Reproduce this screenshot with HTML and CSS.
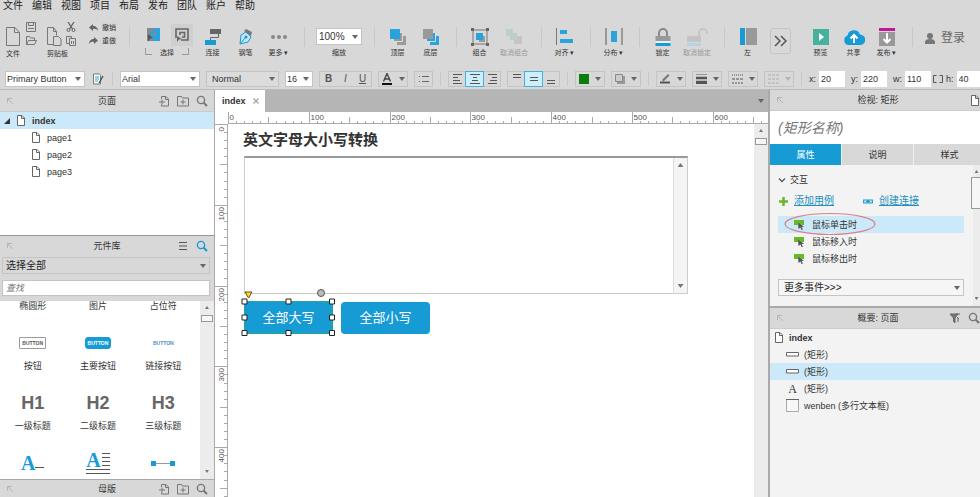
FILE: index.html
```html
<!DOCTYPE html>
<html lang="zh-CN">
<head>
  <meta charset="UTF-8">
  <meta name="viewport" content="width=device-width, initial-scale=1.0">
  <title>index - Prototype Editor</title>
  <link rel="stylesheet" href="styles.css">
</head>
<body>
  <!-- shared icons -->
  <svg class="defs" aria-hidden="true">
    <symbol id="page" viewBox="0 0 10 11"><path d="M1.500.500h4.500l2.500 2.500v7.500h-7z M5.500.500v3h3" fill="#fff" stroke="#666"/></symbol>
    <symbol id="undock" viewBox="0 0 8 8"><path d="M1.500 6V1.500H6M1.500 1.500L7 7" fill="none" stroke="#b5b5b5"/></symbol>
    <symbol id="addPage" viewBox="0 0 12 12"><path d="M3.500 4V1.500h4.500l2.500 2.500v7h-7V9.500M7.500 1.500v3h3M1 7h6M4 4.500v5" fill="none" stroke="#777"/></symbol>
    <symbol id="addFolder" viewBox="0 0 12 12"><path d="M.5 1.500h4l1 1.500h6v8H.5zM3.500 7h5M6 4.500v5" fill="none" stroke="#777"/></symbol>
    <symbol id="search" viewBox="0 0 12 12"><path d="M7.700 7.700L11 11" stroke="currentColor" stroke-width="2"/><circle cx="5" cy="5" r="3.600" fill="none" stroke="currentColor" stroke-width="1.400"/></symbol>
    <symbol id="caret" viewBox="0 0 6 4"><path d="M0 0h6L3 4z" fill="#666"/></symbol>
    <symbol id="event" viewBox="0 0 11 11"><path d="M0 1h10v5H8L4 3v3H0z" fill="#6b2"/><path d="M4 3l6 5H7.500l1.500 2.500-1.500.5L6.500 8.500 4.500 10z" fill="#555"/></symbol>
    <symbol id="rect" viewBox="0 0 13 5"><path d="M.5.500h12v3.500h-12z" fill="#fff" stroke="#666"/></symbol>
  </svg>

  <nav class="menubar">
    <a href="#">文件</a>
    <a href="#">编辑</a>
    <a href="#">视图</a>
    <a href="#">项目</a>
    <a href="#">布局</a>
    <a href="#">发布</a>
    <a href="#">团队</a>
    <a href="#">账户</a>
    <a href="#">帮助</a>
  </nav>

  <div class="toolbar">
    <div class="tool-group file-group">
      <div class="tool-pair">
        <button aria-label="新建"><svg width="14" height="19" viewBox="0 0 14 19"><path d="M.5.500h8.500l4.500 5v13H.5zM8.500.500v5h5" fill="none" stroke="#777"/></svg></button>
        <div class="tool-stack">
          <button aria-label="保存"><svg width="10" height="10" viewBox="0 0 10 10"><path d="M.5.500h9v9h-9zM2.500.500v3h5v-3M2 6.500h6" fill="none" stroke="#777"/></svg></button>
          <button aria-label="打开"><svg width="11" height="10" viewBox="0 0 11 10"><path d="M.5 8.500v-8h3l1 1.500h4v2M.5 8.500l2-4h8l-2 4z" fill="none" stroke="#777"/></svg></button>
        </div>
      </div>
      <span>文件</span>
    </div>
    <div class="tool-group clip-group">
      <div class="tool-pair">
        <button aria-label="粘贴"><svg width="15" height="19" viewBox="0 0 15 19"><path d="M6.500 17.500h-6V.500h6l3 4v4M6.500.500v4h3M6.500 9.500h5l2.500 2.500v6.500H6.500z" fill="none" stroke="#777"/></svg></button>
        <div class="tool-stack">
          <button aria-label="剪切"><svg width="10" height="10" viewBox="0 0 10 10"><path d="M2 0l4.500 7M8 0L3.500 7" stroke="#666" stroke-width="1.300"/><circle cx="2.500" cy="8" r="1.500" fill="none" stroke="#666"/><circle cx="7.500" cy="8" r="1.500" fill="none" stroke="#666"/></svg></button>
          <button aria-label="复制"><svg width="10" height="10" viewBox="0 0 10 10"><path d="M3.500 7.500h-3v-7h5v2M3.500 2.500h6v7h-6zM5.500 5v3M7.500 5v3" fill="none" stroke="#777"/></svg></button>
        </div>
      </div>
      <span>剪贴板</span>
    </div>
    <div class="undo-group">
      <button><svg width="9" height="8" viewBox="0 0 9 8"><path d="M0 3.500L4 0v2c3 0 5 2 5 5-1-2-3-2.500-5-2v2z" fill="#666"/></svg>撤销</button>
      <button><svg width="9" height="8" viewBox="0 0 9 8"><path d="M9 3.500L5 0v2C2 2 0 4 0 7c1-2 3-2.500 5-2v2z" fill="#666"/></svg>重做</button>
    </div>
    <i class="sep"></i>
    <div class="select-group">
      <div class="select-modes">
        <button aria-label="相交选中"><svg width="14" height="14" viewBox="0 0 14 14"><path d="M0 0h6v13H0z" fill="#888"/><path d="M6 0h7v13H6z" fill="#29a3dc"/><path d="M3 3h3v6H3z" fill="#29a3dc"/><path d="M6 3h3v4H6z" fill="#888"/><path d="M1 6l5 4-3 .5L1 14z" fill="#555"/></svg></button>
        <button class="pressed" aria-label="包含选中"><svg width="14" height="14" viewBox="0 0 14 14"><path d="M1 10V1h12v11H6M5 7V4.500h4.500V9H7" fill="none" stroke="#666" stroke-width="1.600"/><path d="M2 8l5 3-3 .5L2 14z" fill="#666"/></svg></button>
      </div>
      <span class="bracket">选择</span>
    </div>
    <button class="tool"><svg width="18" height="18" viewBox="0 0 18 18"><path d="M6 1h11v5H6z" fill="#666"/><path d="M1 12h11v5H1z" fill="#169bd5"/><path d="M14.500 6v3.500h-8V12" fill="none" stroke="#666"/></svg>连接</button>
    <button class="tool"><svg width="18" height="18" viewBox="0 0 18 18"><path d="M3 16l1-9 5-3 5 5-3 5z" fill="#c5e5f4" stroke="#169bd5"/><path d="M3 16l5-6" stroke="#169bd5"/><circle cx="9" cy="9" r="1.500" fill="#169bd5"/><path d="M7 3l2-2 6 3-1 4z" fill="#777"/></svg>钢笔</button>
    <button class="tool"><svg width="18" height="18" viewBox="0 0 18 18"><g fill="#888"><circle cx="3" cy="9" r="2"/><circle cx="9" cy="9" r="2"/><circle cx="15" cy="9" r="2"/></g></svg>更多 ▾</button>
    <i class="sep"></i>
    <div class="zoom">
      <select id="zoom"><option>100%</option></select>
      <label for="zoom">缩放</label>
    </div>
    <i class="sep"></i>
    <button class="tool"><svg width="18" height="18" viewBox="0 0 18 18"><path d="M8 8h9v9H8z" fill="#999"/><path d="M4.500 4.500h9v9h-9z" fill="#999" stroke="#ddd"/><path d="M1 1h10v10H1z" fill="#29a3dc"/></svg>顶层</button>
    <button class="tool"><svg width="18" height="18" viewBox="0 0 18 18"><path d="M8 8h9v9H8z" fill="#29a3dc"/><path d="M4.500 4.500h9v9h-9z" fill="#29a3dc" stroke="#ddd"/><path d="M1 1h10v10H1z" fill="#999"/></svg>底层</button>
    <i class="sep"></i>
    <button class="tool"><svg width="18" height="18" viewBox="0 0 18 18"><path d="M2 2h14v14H2z" fill="none" stroke="#777"/><path d="M8 8h6v6H8z" fill="#999"/><path d="M5 5h7v7H5z" fill="#29a3dc"/><path d="M0 0h3v3H0zM15 0h3v3h-3zM0 15h3v3H0zM15 15h3v3h-3z" fill="#666"/></svg>组合</button>
    <button class="tool wide disabled"><svg width="18" height="18" viewBox="0 0 18 18"><path d="M1 1h7v7H1z" fill="#bccfce"/><path d="M9 8h8v8H9z" fill="#c4c4c4"/><path d="M5 5h7v7H5z" fill="#b8cfce"/></svg>取消组合</button>
    <i class="sep"></i>
    <button class="tool"><svg width="18" height="18" viewBox="0 0 18 18"><path d="M.500 0v17" stroke="#777"/><path d="M4 2h7v4H4zM4 11h13v4H4z" fill="#29a3dc"/></svg>对齐 ▾</button>
    <i class="sep"></i>
    <button class="tool"><svg width="18" height="18" viewBox="0 0 18 18"><path d="M1 0v17M17 0v17" stroke="#999" stroke-width="2"/><path d="M6 3h6v11H6z" fill="#29a3dc"/></svg>分布 ▾</button>
    <i class="sep"></i>
    <button class="tool"><svg width="18" height="18" viewBox="0 0 18 18"><path d="M5 9V5a4 4 0 0 1 8 0v4" fill="none" stroke="#888" stroke-width="2"/><path d="M1.500 8h15v5h-15z" fill="#999"/><path d="M1.500 13h15v2h-15z" fill="#eee"/><path d="M1.500 15h15v3h-15z" fill="#169bd5"/></svg>锁定</button>
    <button class="tool wide disabled"><svg width="22" height="18" viewBox="0 0 22 18"><path d="M13 9V5a4 4 0 0 1 8 0v1" fill="none" stroke="#c4c4c4" stroke-width="2"/><path d="M1 8h14v6H1z" fill="#c4c4c4"/><path d="M1 15h14v3H1z" fill="#b5d3e4"/></svg>取消锁定</button>
    <i class="sep"></i>
    <button class="tool"><svg width="18" height="18" viewBox="0 0 18 18"><path d="M1 0h5v17H1z" fill="#169bd5"/><path d="M7 0h11v17H7z" fill="#999"/></svg>左</button>
    <button class="expand" aria-label="展开"><svg width="13" height="12" viewBox="0 0 13 12"><path d="M1 1l5 5-5 5M7 1l5 5-5 5" fill="none" stroke="#555" stroke-width="1.500"/></svg></button>
    <button class="tool first"><svg width="18" height="18" viewBox="0 0 18 18"><path d="M1 1h16v16H1z" fill="#45b39c"/><path d="M7 5l5 4-5 4z" fill="#fff"/></svg>预览</button>
    <button class="tool"><svg width="22" height="18" viewBox="0 0 22 18"><path d="M5 17a5 5 0 0 1-.500-9.500A6.500 6.500 0 0 1 17 6.500 5.200 5.200 0 0 1 17 17z" fill="#169bd5"/><path d="M11 15V8M7.500 10.500L11 7l3.500 3.500" fill="none" stroke="#fff" stroke-width="2"/></svg>共享</button>
    <button class="tool"><svg width="18" height="18" viewBox="0 0 18 18"><path d="M1 0h16v3H1z" fill="#c3179b"/><path d="M1 4h16v14H1z" fill="#999"/><path d="M9 5v9M5.500 11L9 14.500l3.500-3.500" fill="none" stroke="#fff" stroke-width="2"/></svg>发布 ▾</button>
    <i class="sep"></i>
    <button class="login"><svg width="10" height="11" viewBox="0 0 10 11"><circle cx="5" cy="3" r="3" fill="#777"/><path d="M0 11V9c0-2 2-3 5-3s5 1 5 3v2z" fill="#777"/></svg>登录</button>
  </div>

  <div class="formatbar">
    <select class="style-name" aria-label="样式"><option>Primary Button</option></select>
    <button class="plain" aria-label="样式管理"><svg width="12" height="12" viewBox="0 0 12 12"><path d="M1.500 1h6l1 1.500v8.500h-7z" fill="#fff" stroke="#777"/><path d="M3 4h4M3 6h4M3 8h3" stroke="#29a3dc"/><path d="M11 3l-4 7" stroke="#555" stroke-width="1.500"/></svg></button>
    <i class="sep"></i>
    <select class="font-name" aria-label="字体"><option>Arial</option></select>
    <select class="font-type" aria-label="字型"><option>Normal</option></select>
    <select class="font-size" aria-label="字号"><option>16</option></select>
    <div class="segment">
      <button><b>B</b></button>
      <button><i>I</i></button>
      <button><u>U</u></button>
    </div>
    <button class="drop" aria-label="文字颜色"><svg width="12" height="12" viewBox="0 0 12 12"><path d="M2.500 8.500L6 .5l3.500 8M4 6h4" fill="none" stroke="#444" stroke-width="1.400"/><path d="M1 10h10v2H1z" fill="#111"/></svg><svg width="6" height="4"><use href="#caret"/></svg></button>
    <button class="box" aria-label="项目符号"><svg width="12" height="10" viewBox="0 0 12 10"><path d="M1 2.500h1M4 2.500h7M1 7.500h1M4 7.500h7" stroke="#666"/></svg></button>
    <i class="sep"></i>
    <div class="segment">
      <button aria-label="左对齐"><svg width="10" height="10" viewBox="0 0 10 10"><path d="M0 .5h9M0 3.500h5M0 6.500h7M0 9.500h9" stroke="#555"/></svg></button>
      <button class="on" aria-label="居中"><svg width="10" height="10" viewBox="0 0 10 10"><path d="M0 .5h10M3 3.500h4M2 6.500h6M0 9.500h10" stroke="#555"/></svg></button>
      <button aria-label="右对齐"><svg width="10" height="10" viewBox="0 0 10 10"><path d="M1 .5h9M5 3.500h5M3 6.500h7M1 9.500h9" stroke="#555"/></svg></button>
    </div>
    <div class="segment">
      <button aria-label="顶部对齐"><svg width="8" height="10" viewBox="0 0 8 10"><path d="M0 .5h8M0 3.500h8" stroke="#555"/></svg></button>
      <button class="on" aria-label="垂直居中"><svg width="8" height="10" viewBox="0 0 8 10"><path d="M0 3.500h8M0 6.500h8" stroke="#555"/></svg></button>
      <button aria-label="底部对齐"><svg width="8" height="10" viewBox="0 0 8 10"><path d="M0 6.500h8M0 9.500h8" stroke="#555"/></svg></button>
    </div>
    <i class="sep"></i>
    <button class="drop" aria-label="填充颜色"><svg width="10" height="10"><path d="M0 0h10v10H0z" fill="#0a7d0a"/></svg><svg width="6" height="4"><use href="#caret"/></svg></button>
    <button class="drop" aria-label="阴影"><svg width="10" height="10" viewBox="0 0 10 10"><path d="M2 2h8v8H2z" fill="#999"/><path d="M.5.500h7v7h-7z" fill="#ccc" stroke="#888"/></svg><svg width="6" height="4"><use href="#caret"/></svg></button>
    <i class="sep"></i>
    <button class="drop" aria-label="线条颜色"><svg width="11" height="11" viewBox="0 0 11 11"><path d="M2 7l6-6 1.500 1.500-6 6z" fill="#777"/><path d="M0 9.500h10" stroke="#555" stroke-width="2"/></svg><svg width="6" height="4"><use href="#caret"/></svg></button>
    <button class="drop" aria-label="线宽"><svg width="11" height="10" viewBox="0 0 11 10"><path d="M0 .5h11M0 3h11v2H0zM0 7h11v3H0z" fill="#555" stroke="#555" stroke-width=".5"/></svg><svg width="6" height="4"><use href="#caret"/></svg></button>
    <button class="drop" aria-label="线型"><svg width="11" height="10" viewBox="0 0 11 10"><path d="M0 1h11" stroke="#555" stroke-dasharray="1 1"/><path d="M0 5h11" stroke="#555" stroke-dasharray="3 1"/><path d="M0 9h11" stroke="#555" stroke-dasharray="2 1"/></svg><svg width="6" height="4"><use href="#caret"/></svg></button>
    <button class="drop faded" aria-label="箭头"><svg width="11" height="10" viewBox="0 0 11 10"><path d="M0 1h11M0 5h11M0 9h11" stroke="#555" stroke-dasharray="3 1"/></svg><svg width="6" height="4"><use href="#caret"/></svg></button>
    <i class="sep"></i>
    <div class="coord"><label for="posX">x:</label><input id="posX" type="text" value="20"></div>
    <div class="coord"><label for="posY">y:</label><input id="posY" type="text" value="220"></div>
    <div class="coord"><label for="sizeW">w:</label><input id="sizeW" type="text" value="110"></div>
    <div class="coord last"><svg width="10" height="8" viewBox="0 0 10 8"><path d="M3.500.500h-3v7h3M6.500.500h3v7h-3" fill="none" stroke="#555"/></svg><label for="sizeH">h:</label><input id="sizeH" type="text" value="40"></div>
  </div>

  <div class="workspace">
    <aside class="left">
      <section class="pages">
        <header class="panel-head">
          <svg width="8" height="8"><use href="#undock"/></svg>
          <h2>页面</h2>
          <div class="head-icons">
            <button aria-label="添加页面"><svg width="12" height="12"><use href="#addPage"/></svg></button>
            <button aria-label="添加文件夹"><svg width="12" height="12"><use href="#addFolder"/></svg></button>
            <button aria-label="搜索"><svg width="12" height="12"><use href="#search"/></svg></button>
          </div>
        </header>
        <ul class="tree">
          <li class="root selected"><svg width="6" height="6" viewBox="0 0 6 6"><path d="M6 0v6H0z" fill="#333"/></svg><svg width="10" height="11"><use href="#page"/></svg>index</li>
          <li><svg width="10" height="11"><use href="#page"/></svg>page1</li>
          <li><svg width="10" height="11"><use href="#page"/></svg>page2</li>
          <li><svg width="10" height="11"><use href="#page"/></svg>page3</li>
        </ul>
      </section>
      <section class="library">
        <header class="panel-head">
          <svg width="8" height="8"><use href="#undock"/></svg>
          <h2>元件库</h2>
          <div class="head-icons">
            <button aria-label="菜单"><svg width="12" height="12" viewBox="0 0 12 12"><path d="M2 2.500h8M2 6h8M2 9.500h8" stroke="#555"/></svg></button>
            <button class="blue" aria-label="搜索"><svg width="12" height="12"><use href="#search"/></svg></button>
          </div>
        </header>
        <div class="filters">
          <select aria-label="元件库"><option>选择全部</option></select>
          <input type="text" placeholder="查找" aria-label="查找">
        </div>
        <div class="widgets">
          <div class="widget-grid">
            <div class="widget"><span>椭圆形</span></div>
            <div class="widget"><span>图片</span></div>
            <div class="widget"><span>占位符</span></div>
            <div class="widget"><div class="thumb"><b class="mini">BUTTON</b></div><span>按钮</span></div>
            <div class="widget"><div class="thumb"><b class="mini primary">BUTTON</b></div><span>主要按钮</span></div>
            <div class="widget"><div class="thumb"><b class="mini link">BUTTON</b></div><span>链接按钮</span></div>
            <div class="widget"><div class="thumb heading">H1</div><span>一级标题</span></div>
            <div class="widget"><div class="thumb heading">H2</div><span>二级标题</span></div>
            <div class="widget"><div class="thumb heading">H3</div><span>三级标题</span></div>
            <div class="widget"><div class="thumb letter">A<svg width="9" height="12"><path d="M0 10.500h9" stroke="#555"/></svg></div></div>
            <div class="widget"><div class="thumb letter para"><div>A<svg width="9" height="15" viewBox="0 0 9 15"><path d="M1 1.500h8M1 5.500h8M1 9.500h8M1 13.500h8" stroke="#555"/></svg></div></div></div>
            <div class="widget"><div class="thumb"><svg width="24" height="5" viewBox="0 0 24 5"><path d="M2 2.500h20" stroke="#999"/><path d="M0 0h5v5H0zM19 0h5v5h-5z" fill="#169bd5"/></svg></div></div>
          </div>
          <div class="scrollbar"><i class="up"></i><i class="handle"></i><i class="down"></i></div>
        </div>
      </section>
      <header class="panel-head masters">
        <svg width="8" height="8"><use href="#undock"/></svg>
        <h2>母版</h2>
        <div class="head-icons">
          <button aria-label="添加母版"><svg width="12" height="12"><use href="#addPage"/></svg></button>
          <button aria-label="添加文件夹"><svg width="12" height="12"><use href="#addFolder"/></svg></button>
          <button aria-label="搜索"><svg width="12" height="12"><use href="#search"/></svg></button>
        </div>
      </header>
    </aside>

    <main class="editor">
      <div class="tabs">
        <div class="tab">index <button aria-label="关闭"><svg width="6" height="6" viewBox="0 0 6 6"><path d="M.5.500l5 5M5.500.500l-5 5" stroke="#aaa" stroke-width="1.500"/></svg></button></div>
        <svg width="6" height="4"><use href="#caret"/></svg>
      </div>
      <div class="stage">
        <div class="corner"></div>
        <svg class="ruler-x" id="rulerX"></svg>
        <svg class="ruler-y" id="rulerY"></svg>
        <div class="canvas">
          <h1>英文字母大小写转换</h1>
          <textarea aria-label="wenben"></textarea>
          <div class="gutter"><i class="up"></i><i class="down"></i></div>
          <button class="shape upper">全部大写</button>
          <button class="shape lower">全部小写</button>
          <svg class="selection" width="96" height="52" viewBox="0 0 96 52">
            <path d="M4.500 15.500h87v31h-87z" fill="none" stroke="#2aa58f"/>
            <path d="M5 6h7l-3.500 6z" fill="#fd3" stroke="#740"/>
            <circle cx="81" cy="7" r="3.500" fill="#bbb" stroke="#555"/>
            <path d="M2 13h5v5H2zM46 13h5v5h-5zM89.500 13h5v5h-5zM2 29h5v5H2zM89.500 29h5v5h-5zM2 44.500h5v5H2zM46 44.500h5v5h-5zM89.500 44.500h5v5h-5z" fill="#fff" stroke="#222"/>
          </svg>
        </div>
        <div class="scrollbar"><i class="up"></i><i class="handle"></i></div>
      </div>
    </main>

    <aside class="right">
      <section class="inspector">
        <header class="panel-head">
          <svg width="8" height="8"><use href="#undock"/></svg>
          <h2>检视: 矩形</h2>
          <div class="head-icons"><svg width="10" height="11"><use href="#page"/></svg></div>
        </header>
        <input class="shape-name" type="text" placeholder="(矩形名称)" aria-label="矩形名称">
        <div class="prop-tabs">
          <button class="active">属性</button>
          <button>说明</button>
          <button>样式</button>
        </div>
        <div class="props">
          <div class="props-body">
            <h3><svg width="8" height="5" viewBox="0 0 8 5"><path d="M1 .5l3 3 3-3" fill="none" stroke="#555" stroke-width="1.300"/></svg>交互</h3>
            <div class="links">
              <svg width="9" height="9" viewBox="0 0 9 9"><path d="M4.500 0v9M0 4.500h9" stroke="#6ab52b" stroke-width="2.500"/></svg>
              <a href="#">添加用例</a>
              <svg class="chain" width="10" height="5" viewBox="0 0 10 5"><path d="M.7 1h3.600v3H.7zM5.700 1h3.600v3H5.700zM3 2.500h4" fill="none" stroke="#169bd5" stroke-width="1.200"/></svg>
              <a href="#">创建连接</a>
            </div>
            <ul class="events">
              <li class="selected"><svg width="11" height="11"><use href="#event"/></svg>鼠标单击时
                <svg class="ring" width="94" height="24" viewBox="0 0 94 24"><ellipse cx="47" cy="12" rx="45" ry="10.500" fill="none" stroke="#d9808c" stroke-width="1.200"/></svg>
              </li>
              <li><svg width="11" height="11"><use href="#event"/></svg>鼠标移入时</li>
              <li><svg width="11" height="11"><use href="#event"/></svg>鼠标移出时</li>
            </ul>
            <select class="more-events" aria-label="更多事件"><option>更多事件&gt;&gt;&gt;</option></select>
          </div>
          <div class="scrollbar"><i class="up"></i><i class="handle tall"></i><i class="down"></i></div>
        </div>
      </section>
      <section class="outline">
        <header class="panel-head">
          <svg width="8" height="8"><use href="#undock"/></svg>
          <h2>概要: 页面</h2>
          <div class="head-icons">
            <button aria-label="筛选"><svg width="12" height="12" viewBox="0 0 12 12"><path d="M1 2h8L6 6v5L4.500 9.500V6zM7 2h4M8 5l2 2M9 6v4" fill="#777" stroke="#666"/></svg></button>
            <button aria-label="搜索"><svg width="12" height="12"><use href="#search"/></svg></button>
          </div>
        </header>
        <ul class="layers">
          <li class="root"><svg width="10" height="11"><use href="#page"/></svg>index</li>
          <li><svg width="13" height="5"><use href="#rect"/></svg>(矩形)</li>
          <li class="selected"><svg width="13" height="5"><use href="#rect"/></svg>(矩形)</li>
          <li><span class="glyph">A</span>(矩形)</li>
          <li><svg width="13" height="13" viewBox="0 0 13 13"><path d="M.5.500h12v12H.5z" fill="#f8f8f8" stroke="#aaa"/><path d="M0 .5h13" stroke="#666"/></svg>wenben (多行文本框)</li>
        </ul>
      </section>
    </aside>
  </div>

  <script>
    // 100 canvas units = 80.8 screen px at the current zoom
    var step = 8.08;

    function drawRuler(id, vertical) {
      var ruler = document.getElementById(id);
      var box = ruler.getBoundingClientRect();
      var size = vertical ? box.height : box.width;
      var str = "";
      for (var i = 0; i * step < size; i++) {
        var p = Math.round(i * step) + 0.5;
        var len = i % 10 == 0 ? 12 : i % 5 == 0 ? 7 : 3;
        if (vertical) {
          str += "<path d='M" + (12 - len) + " " + p + "h" + len + "'/>";
        } else {
          str += "<path d='M" + p + " " + (12 - len) + "v" + len + "'/>";
        }
        if (i % 10 == 0 && p + 20 < size) {
          var n = i * 10;
          if (vertical) {
            var end = p + 3 + String(n).length * 4;
            str += "<text transform='translate(9 " + end + ") rotate(-90)'>" + n + "</text>";
          } else {
            str += "<text x='" + (p + 1) + "' y='8'>" + n + "</text>";
          }
        }
      }
      ruler.innerHTML = str;
    }

    function drawRulers() {
      drawRuler("rulerX", false);
      drawRuler("rulerY", true);
    }

    drawRulers();
    window.addEventListener("resize", drawRulers);
  </script>
</body>
</html>
```
FILE: styles.css
```css
* {
  box-sizing: border-box;
}

body {
  display: flex;
  flex-direction: column;
  height: 100vh;
  margin: 0;
  overflow: hidden;
  background-color: #d8d8d8;
  color: #333;
  font-family: "Liberation Sans", "Noto Sans CJK SC", sans-serif;
  font-size: 9px;
  line-height: 12px;
}

h1, h2, h3, ul {
  margin: 0;
  padding: 0;
}

ul {
  list-style: none;
}

button, select, input, textarea {
  margin: 0;
  padding: 0;
  border: none;
  border-radius: 0;
  background: none;
  color: inherit;
  font: inherit;
}

svg {
  display: block;
  flex: none;
}

.defs {
  position: absolute;
  width: 0;
  height: 0;
}

select {
  appearance: none;
  border: 1px solid #c4c4c4;
  background: #fff url("data:image/svg+xml,%3Csvg xmlns='http://www.w3.org/2000/svg' width='6' height='4'%3E%3Cpath d='M0 0h6L3 4z' fill='%23666'/%3E%3C/svg%3E") no-repeat right 3px center;
}

/* menu */
.menubar {
  display: flex;
  flex: none;
  gap: 9px;
  height: 14px;
  padding-left: 3px;
  font-size: 10px;
}

.menubar a {
  color: #222;
  text-decoration: none;
}

/* main toolbar */
.toolbar {
  display: flex;
  flex: none;
  align-items: flex-start;
  height: 54px;
  padding: 8px 0 0 6px;
  font-size: 7px;
  line-height: 10px;
}

.sep {
  flex: none;
  width: 1px;
  background-color: #c8c8c8;
}

.toolbar .sep {
  height: 20px;
  margin: 5px 6px 0 9px;
}

.tool {
  display: flex;
  flex: none;
  flex-direction: column;
  align-items: center;
  gap: 2px;
  width: 33px;
  padding-top: 6px;
  white-space: nowrap;
}

.tool.wide {
  width: 36px;
}

.tool.disabled {
  color: #999;
}

.tool-group {
  flex: none;
}

.file-group {
  width: 41px;
}

.clip-group {
  width: 42px;
}

.tool-pair {
  display: flex;
  align-items: flex-end;
  gap: 6px;
  height: 24px;
  margin-bottom: 3px;
}

.clip-group .tool-pair {
  gap: 4px;
}

.tool-stack {
  display: flex;
  flex-direction: column;
  gap: 4px;
}

.undo-group {
  display: flex;
  flex: none;
  flex-direction: column;
  gap: 3px;
  width: 31px;
  padding-top: 1px;
}

.undo-group button {
  display: flex;
  align-items: center;
  gap: 4px;
}

.select-group {
  flex: none;
  width: 60px;
  padding: 2px 7px 0 9px;
}

.select-modes {
  display: flex;
  gap: 6px;
  margin-bottom: 2px;
}

.select-modes button {
  padding: 4px;
}

.select-modes button:first-child {
  padding-left: 2px;
}

.pressed {
  background-color: #cfcfcf;
}

.bracket {
  display: flex;
  justify-content: space-between;
}

.bracket::before,
.bracket::after {
  width: 6px;
  height: 6px;
  border: solid #999;
  border-width: 0 0 1px 1px;
  content: "";
}

.bracket::after {
  border-width: 0 1px 1px 0;
}

.zoom {
  display: flex;
  flex: none;
  flex-direction: column;
  align-items: center;
  gap: 3px;
  padding: 6px 3px 0 5px;
}

.zoom select {
  width: 46px;
  height: 17px;
  padding-left: 2px;
  font-size: 10px;
}

.expand {
  flex: none;
  margin: 6px 0 0 6px;
  padding: 6px 3px;
  border: 1px solid #c4c4c4;
  border-radius: 3px;
}

.tool.first {
  margin-left: 13px;
}

.login {
  display: flex;
  align-items: center;
  gap: 6px;
  margin: 9px 0 0 6px;
  color: #666;
  font-size: 12px;
  line-height: 14px;
}

/* format bar */
.formatbar {
  display: flex;
  flex: none;
  align-items: center;
  gap: 6px;
  height: 22px;
  padding-left: 5px;
  border-bottom: 1px solid #bbb;
}

.formatbar > * {
  flex: none;
}

.formatbar select {
  height: 16px;
  padding-left: 1px;
}

.formatbar .sep {
  height: 14px;
  margin: 0 1px;
}

.formatbar .style-name,
.formatbar .font-name {
  width: 80px;
}

.formatbar .font-type {
  width: 73px;
  padding-left: 5px;
  background-color: #dcdcdc;
}

.formatbar .font-size {
  width: 28px;
}

.plain {
  padding: 0 1px;
}

.segment {
  display: flex;
  border: 1px solid #c4c4c4;
}

.segment button {
  display: flex;
  align-items: center;
  justify-content: center;
  width: 17px;
  height: 14px;
  color: #555;
  font-size: 10px;
}

.segment .on {
  background-color: #cdeefb;
  outline: 1px solid #4aaeda;
}

.drop,
.box {
  display: flex;
  align-items: center;
  justify-content: center;
  gap: 6px;
  width: 30px;
  height: 16px;
  border: 1px solid #c4c4c4;
}

.box {
  width: 19px;
}

.faded svg {
  opacity: 0.3;
}

.coord {
  display: flex;
  align-items: center;
  gap: 3px;
}

.coord input {
  width: 26px;
  height: 16px;
  padding-left: 2px;
  background-color: #fff;
}

.coord.last {
  margin-left: -4px;
}

/* panels */
.workspace {
  display: flex;
  flex: 1;
  min-height: 0;
}

.left {
  display: flex;
  flex: none;
  flex-direction: column;
  width: 215px;
  border-right: 1px solid #aaa;
}

.panel-head {
  display: grid;
  grid-template-columns: 1fr auto 1fr;
  flex: none;
  align-items: center;
  height: 22px;
  padding: 0 6px;
  border-bottom: 1px solid #ccc;
  background-color: #d8d8d8;
  color: #555;
}

.panel-head h2 {
  color: #333;
  font-size: 9px;
  font-weight: normal;
}

.head-icons {
  display: flex;
  gap: 7px;
  justify-content: flex-end;
  color: #777;
}

.head-icons .blue {
  color: #169bd5;
}

.tree li,
.layers li {
  display: flex;
  align-items: center;
  gap: 6px;
  height: 17px;
  padding-left: 31px;
}

.tree .root,
.layers .root {
  padding-left: 4px;
  font-weight: bold;
}

.selected {
  background-color: #cbe9f8;
}

.pages {
  height: 146px;
  border-bottom: 1px solid #999;
  background-color: #fff;
}

.library {
  display: flex;
  flex: 1;
  flex-direction: column;
  min-height: 0;
}

.library .panel-head {
  height: 20px;
  border-bottom: none;
}

.filters {
  display: flex;
  flex-direction: column;
  gap: 6px;
  padding: 1px 4px 5px 2px;
}

.filters select {
  height: 17px;
  padding-left: 3px;
  background-color: #d8d8d8;
  color: #222;
  font-size: 10px;
}

.filters input {
  height: 16px;
  padding-left: 3px;
  border: 1px solid #c4c4c4;
  background-color: #fff;
  font-style: italic;
}

.widgets {
  display: flex;
  flex: 1;
  min-height: 0;
  overflow: hidden;
  background-color: #fff;
}

.widget-grid {
  display: grid;
  grid-template-columns: repeat(3, 1fr);
  grid-template-rows: 10px repeat(3, 60px);
  flex: 1;
  min-height: 0;
  padding-right: 4px;
}

.widget {
  display: flex;
  flex-direction: column;
  align-items: center;
  justify-content: flex-end;
  line-height: 10px;
  white-space: nowrap;
}

.thumb {
  display: flex;
  align-items: center;
  justify-content: center;
  height: 36px;
}

.mini {
  padding: 0 2px;
  border: 1px solid #999;
  border-radius: 1px;
  color: #555;
  font-size: 5px;
  line-height: 10px;
}

.mini.primary {
  border-color: #169bd5;
  border-radius: 3px;
  background-color: #169bd5;
  color: #fff;
}

.mini.link {
  border-color: transparent;
  color: #4a90c8;
}

.heading {
  color: #666;
  font-size: 18px;
  font-weight: bold;
}

.letter {
  color: #169bd5;
  font-family: "Liberation Serif", serif;
  font-size: 20px;
  font-weight: bold;
  line-height: 16px;
}

.letter svg,
.para div {
  display: inline-block;
}

.para div {
  height: 22px;
  border-bottom: 1px solid #555;
  box-shadow: inset 0 -3px #fff, inset 0 -4px #555;
}

.widget > .thumb:last-child {
  margin-bottom: 10px;
}

.panel-head.masters {
  height: 18px;
  border-top: 1px solid #aaa;
  border-bottom: none;
}

.scrollbar {
  display: flex;
  flex: none;
  flex-direction: column;
  align-items: center;
  width: 14px;
  padding: 5px 0 6px;
  background-color: #ececec;
}

.up,
.down {
  width: 6px;
  height: 4px;
  background-color: #777;
  clip-path: polygon(50% 0, 100% 100%, 0 100%);
}

.down {
  margin-top: auto;
  clip-path: polygon(0 0, 100% 0, 50% 100%);
}

.scrollbar .up,
.scrollbar .down {
  width: 4px;
  height: 3px;
}

.handle {
  width: 12px;
  height: 7px;
  margin-top: 6px;
  border: 1px solid #999;
  background-color: #f6f6f6;
}

/* editor */
.editor {
  display: flex;
  flex: 1;
  flex-direction: column;
  min-width: 0;
  border-right: 2px solid #aaa;
}

.tabs {
  display: flex;
  flex: none;
  align-items: center;
  justify-content: space-between;
  height: 22px;
  padding-right: 4px;
  background-color: #b5b5b5;
}

.tab {
  display: flex;
  align-items: center;
  gap: 7px;
  height: 22px;
  padding: 0 6px 0 7px;
  background-color: #fff;
  font-weight: bold;
}

.stage {
  display: grid;
  grid-template-columns: 13px 1fr 14px;
  grid-template-rows: 12px 1fr;
  flex: 1;
  min-height: 0;
  background-color: #fff;
}

.ruler-x,
.ruler-y {
  width: 100%;
  height: 100%;
  overflow: hidden;
  border-bottom: 1px solid #aaa;
  stroke: #aaa;
}

.ruler-x {
  grid-column: 2 / 4;
}

.ruler-y {
  border-right: 1px solid #aaa;
  border-bottom: none;
}

.ruler-x text,
.ruler-y text {
  fill: #555;
  stroke: none;
  font-size: 8px;
}

.canvas {
  position: relative;
  overflow: hidden;
}

.canvas h1 {
  position: absolute;
  top: 6px;
  left: 15px;
  font-size: 15px;
  line-height: 20px;
}

.canvas textarea {
  position: absolute;
  top: 32px;
  left: 16px;
  width: 444px;
  height: 138px;
  border: 1px solid #ccc;
  border-top: 2px solid #999;
  background-color: #fff;
  resize: none;
}

.gutter {
  position: absolute;
  top: 34px;
  left: 445px;
  display: flex;
  flex-direction: column;
  align-items: center;
  width: 14px;
  height: 135px;
  padding: 5px 0;
  border-left: 1px solid #ddd;
  background-color: #f5f5f5;
}

.shape {
  position: absolute;
  top: 178px;
  width: 89px;
  height: 32px;
  background-color: #169bd5;
  color: #fff;
  font-size: 13px;
}

.upper {
  left: 16px;
}

.lower {
  left: 113px;
  border-radius: 4px;
}

.selection {
  position: absolute;
  top: 162px;
  left: 12px;
}

/* right side */
.right {
  display: flex;
  flex: none;
  flex-direction: column;
  width: 210px;
  overflow: hidden;
  background-color: #f3f3f3;
}

.right .panel-head {
  height: 21px;
  padding: 0 0 0 6px;
}

.shape-name {
  display: block;
  width: 100%;
  height: 33px;
  padding-left: 8px;
  background-color: #fff;
  font-size: 14px;
  font-style: italic;
}

.filters input::placeholder,
.shape-name::placeholder {
  color: #777;
}

.prop-tabs {
  display: grid;
  grid-template-columns: repeat(3, 72px);
  height: 21px;
}

.prop-tabs button {
  border-right: 1px solid #eee;
  background-color: #d8d8d8;
}

.prop-tabs .active {
  background-color: #169bd5;
  color: #fff;
}

.props {
  display: flex;
  height: 141px;
}

.props-body {
  flex: 1;
  padding: 9px 9px 0 8px;
}

.props h3 {
  display: flex;
  align-items: center;
  gap: 4px;
  font-size: 9px;
  font-weight: normal;
}

.links {
  display: flex;
  align-items: center;
  gap: 6px;
  margin: 9px 0 9px 1px;
  font-size: 10px;
}

.links a {
  color: #1a8fc0;
}

.chain {
  margin-left: 23px;
}

.events li {
  position: relative;
  display: flex;
  align-items: center;
  gap: 7px;
  height: 17px;
  padding-left: 16px;
}

.ring {
  position: absolute;
  top: -4px;
  left: 5px;
}

.more-events {
  width: 100%;
  height: 17px;
  margin-top: 12px;
  padding-left: 5px;
  background-color: #f6f6f6;
  color: #222;
  font-size: 10px;
}

.props .scrollbar {
  width: 7px;
}

.handle.tall {
  height: 32px;
  margin-top: 4px;
}

.outline {
  flex: 1;
  border-top: 2px solid #aaa;
}

.layers li {
  padding-left: 16px;
  gap: 5px;
}

.glyph {
  width: 13px;
  font-family: "Liberation Serif", serif;
  font-size: 12px;
  text-align: center;
}
```
